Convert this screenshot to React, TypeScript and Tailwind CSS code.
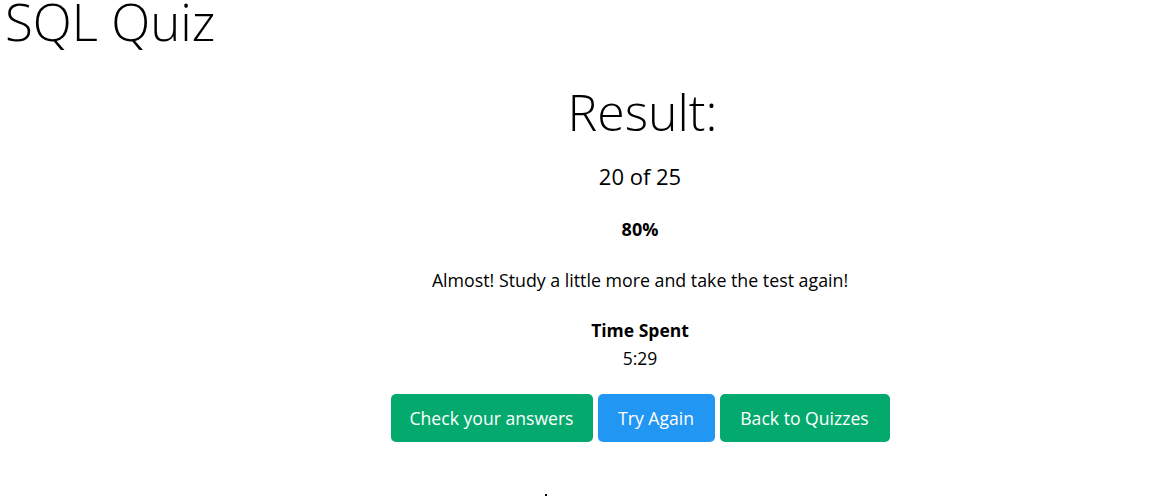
export default function App() {
  return (
    <div className="h-[496px] overflow-hidden bg-white text-black font-['Open_Sans',sans-serif]">
      <h1 className="pl-[5px] text-[51px] font-light leading-[42px]">SQL Quiz</h1>

      <div className="flex flex-col items-center mt-[40px] pl-[130px]">
        <h2 className="text-[50px] font-light leading-[60px] ml-[5px]">Result:</h2>
        <p className="mt-[19px] text-[22px] leading-[30px]">20 of 25</p>
        <p className="mt-[26px] text-[18px] font-bold leading-[24px]">80%</p>
        <p className="mt-[26px] text-[17.8px] leading-[26px]">Almost! Study a little more and take the test again!</p>
        <p className="mt-[25px] text-[17.5px] font-bold leading-[24px]">Time Spent</p>
        <p className="mt-[4px] text-[17.5px] leading-[24px]">5:29</p>

        <div className="mt-[24px] flex gap-[5px]">
          <button className="h-[48px] w-[202px] rounded-[5px] bg-[#04aa6d] text-white text-[17.6px]">Check your answers</button>
          <button className="h-[48px] w-[117px] rounded-[5px] bg-[#2196f3] text-white text-[17.6px]">Try Again</button>
          <button className="h-[48px] w-[170px] rounded-[5px] bg-[#04aa6d] text-white text-[17.6px]">Back to Quizzes</button>
        </div>
      </div>

      <div className="mt-[52px] ml-[545px] w-[2px] h-[2px] bg-black" />
    </div>
  );
}
